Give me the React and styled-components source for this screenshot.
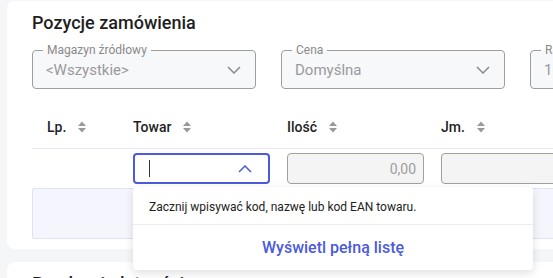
import React from 'react'
import styled, { createGlobalStyle } from 'styled-components'

const GlobalStyle = createGlobalStyle`
    html, body {
        margin: 0;
        padding: 0;
        background: #f5f6f8;
        overflow: hidden;
        font-family: Roboto, "Liberation Sans", sans-serif;
    }
`

const Page = styled.div`
    padding: 1px 0 0 7px;
    width: 760px;
    display: flex;
    flex-direction: column;
    gap: 13px;
`

const Card = styled.section`
    background: #fff;
    border-radius: 8px;
    padding: 11px 25px 10px 25px;
`

const Title = styled.h2`
    margin: 0 0 16px 0;
    font-size: 18px;
    font-weight: 500;
    color: #1f1f1f;
    line-height: 22px;
`

const Filters = styled.div`
    display: flex;
    gap: 25px;
`

const Field = styled.div`
    flex: 0 0 224px;
    height: 39px;
    box-sizing: border-box;
    padding: 0 14px 0 13px;
    border: 1px solid #9e9e9e;
    border-radius: 4px;
    background: #f7f8fa;
    display: flex;
    align-items: center;
    justify-content: space-between;
    position: relative;
`

const FieldLabel = styled.label`
    position: absolute;
    top: -8px;
    left: 10px;
    font-size: 12px;
    line-height: 14px;
    color: #8a8a8a;
    padding: 0 4px;
    background: linear-gradient(#fff 0 50%, #f7f8fa 50% 100%);
`

const FieldValue = styled.span`
    font-size: 15px;
    color: #9a9a9a;
`

const Table = styled.div`
    margin-top: 21px;
`

const Row = styled.div`
    display: grid;
    grid-template-columns: 101px 154px 154px 154px 154px;
    align-items: center;
`

const HeaderRow = styled(Row)`
    height: 39px;
    box-sizing: border-box;
    border-bottom: 1px solid #e4e6f6;
`

const HeadCell = styled.div`
    display: flex;
    align-items: center;
    gap: 11px;
    font-size: 14px;
    font-weight: 500;
    color: #1f1f1f;
    padding-left: ${p => p.$indent || 0}px;
    margin-top: -5px;
`

const InputRow = styled(Row)`
    height: 39px;
`

const Cell = styled.div`
    position: relative;
    height: 31px;
`

const Input = styled.div`
    width: 137px;
    height: 31px;
    box-sizing: border-box;
    border-radius: 4px;
    display: flex;
    align-items: center;
    padding: 0 14px;
    font-size: 14px;
    color: #9e9e9e;
    justify-content: ${p => (p.$right ? 'flex-end' : 'space-between')};
    border: ${p => (p.$active ? '2px solid #4b5bdb' : '1px solid #a0a0a0')};
    background: ${p => (p.$active ? '#fff' : '#f4f4f4')};
    padding-right: ${p => (p.$active ? 16 : 7)}px;
`

const Caret = styled.span`
    width: 1px;
    height: 17px;
    background: #333;
`

const EmptyBox = styled.div`
    height: 51px;
    box-sizing: border-box;
    background: #f4f5fd;
    border: 1px solid #dfe2f8;
    border-radius: 2px;
`

const Dropdown = styled.div`
    position: absolute;
    top: 34px;
    left: 0;
    width: 400px;
    background: #fff;
    border-radius: 4px;
    box-shadow: 0 3px 10px rgba(0, 0, 0, 0.13);
    z-index: 2;
`

const Hint = styled.div`
    font-size: 12px;
    color: #222;
    padding: 13px 16px 0 16px;
    height: 38px;
    box-sizing: border-box;
    border-bottom: 1px solid #ececec;
`

const ShowAll = styled.button`
    display: block;
    width: 100%;
    border: none;
    background: none;
    height: 45px;
    font-family: inherit;
    font-size: 16px;
    font-weight: 500;
    color: #4b5bdb;
    cursor: pointer;
`

const SortIcon = () => (
    <svg width="10" height="12" viewBox="0 0 10 12">
        <path d="M5 0.5 L9 5 L1 5 Z M1 7 L9 7 L5 11.5 Z" fill="#9a9a9a" />
    </svg>
)

const Chevron = ({ up, color = '#8a8a8a' }) => (
    <svg width="14" height="8" viewBox="0 0 14 8">
        <path d={up ? 'M1 7 L7 1 L13 7' : 'M1 1 L7 7 L13 1'} fill="none" stroke={color} strokeWidth="1.5" />
    </svg>
)

export default function App() {
    const columns = [
        { name: 'Lp.', indent: 15 },
        { name: 'Towar' },
        { name: 'Ilość' },
        { name: 'Jm.' },
        { name: 'Rabat' }
    ]

    return (
        <>
            <GlobalStyle />
            <Page>
                <Card>
                    <Title>Pozycje zamówienia</Title>
                    <Filters>
                        <Field>
                            <FieldLabel>Magazyn źródłowy</FieldLabel>
                            <FieldValue>&lt;Wszystkie&gt;</FieldValue>
                            <Chevron />
                        </Field>
                        <Field>
                            <FieldLabel>Cena</FieldLabel>
                            <FieldValue>Domyślna</FieldValue>
                            <Chevron />
                        </Field>
                        <Field>
                            <FieldLabel>Rabat</FieldLabel>
                            <FieldValue>10</FieldValue>
                        </Field>
                    </Filters>
                    <Table>
                        <HeaderRow>
                            {columns.map(col => (
                                <HeadCell key={col.name} $indent={col.indent}>
                                    {col.name}
                                    <SortIcon />
                                </HeadCell>
                            ))}
                        </HeaderRow>
                        <InputRow>
                            <Cell />
                            <Cell>
                                <Input $active>
                                    <Caret />
                                    <Chevron up color="#4b5bdb" />
                                </Input>
                                <Dropdown>
                                    <Hint>Zacznij wpisywać kod, nazwę lub kod EAN towaru.</Hint>
                                    <ShowAll>Wyświetl pełną listę</ShowAll>
                                </Dropdown>
                            </Cell>
                            <Cell>
                                <Input $right>0,00</Input>
                            </Cell>
                            <Cell>
                                <Input />
                            </Cell>
                            <Cell>
                                <Input />
                            </Cell>
                        </InputRow>
                        <EmptyBox />
                    </Table>
                </Card>
                <Card>
                    <Title>Przelew i płatności</Title>
                </Card>
            </Page>
        </>
    )
}
